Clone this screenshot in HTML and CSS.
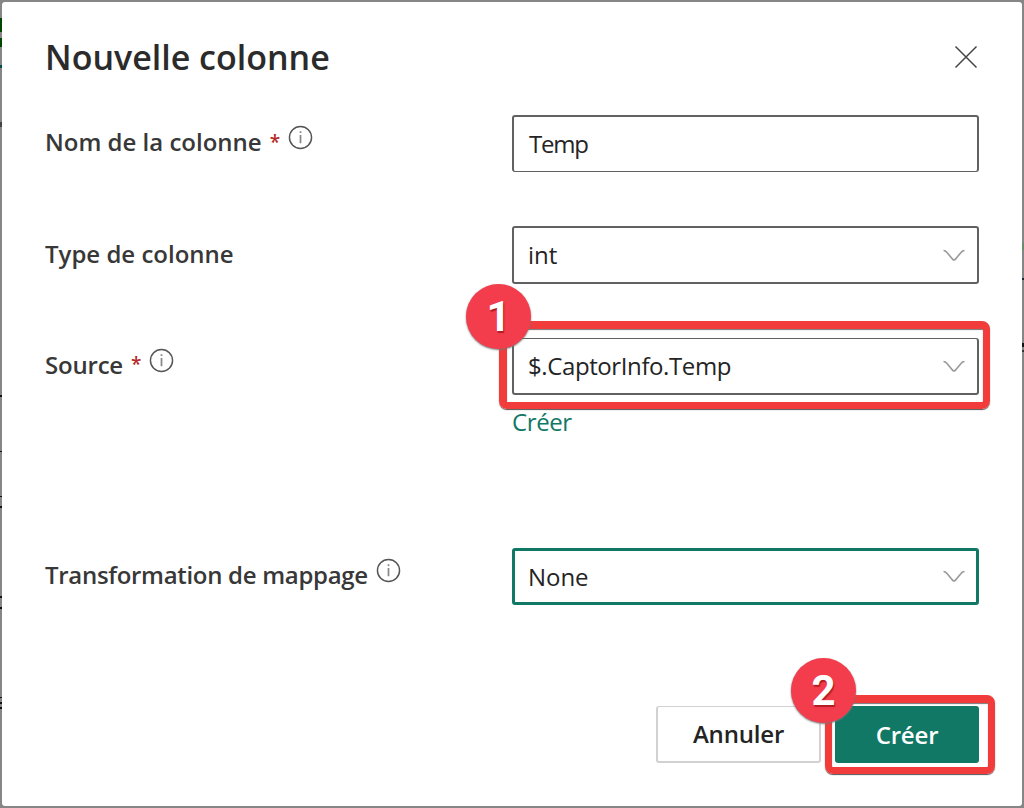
FILE: index.html
```
<!DOCTYPE html>
<html lang="fr">
<head>
<meta charset="utf-8">
<title>Nouvelle colonne</title>
<link rel="stylesheet" href="styles.css">
</head>
<body>
<svg class="symbols" aria-hidden="true">
  <symbol id="info" viewBox="0 0 26 26"><circle cx="13" cy="13" r="11.5" fill="none" stroke="#555" stroke-width="1.5"/><path d="M13 10.500V19M13 6.500V8.300" stroke="#888" stroke-width="1.8"/></symbol>
  <symbol id="chevron" viewBox="0 0 24 14"><path d="M1.500 1.500Q3.500 1.500 5 3.500L10 9.500Q12 12.500 14 9.500L19 3.500Q20.500 1.500 22.500 1.500" fill="none" stroke="#999" stroke-width="1.6"/></symbol>
</svg>
<main class="dialog" role="dialog" aria-labelledby="title">
  <header class="header">
    <h1 class="title" id="title">Nouvelle colonne</h1>
    <button class="close" aria-label="Fermer"><svg width="24" height="24" viewBox="0 0 24 24"><path d="M1.500 1.500L22.500 22.500M22.500 1.500L1.500 22.500" stroke="#444" stroke-width="1.5"/></svg></button>
  </header>
  <div class="form">
    <div class="row">
      <div class="label"><span>Nom de la colonne</span><span class="required">*</span><svg class="info"><use href="#info"/></svg></div>
      <div class="control name"><span class="text-temp">Temp</span></div>
    </div>
    <div class="row">
      <div class="label label-type"><span>Type de colonne</span></div>
      <div class="control"><span>int</span><svg class="chevron"><use href="#chevron"/></svg></div>
    </div>
    <div class="row source">
      <div class="label label-source"><span>Source</span><span class="required">*</span><svg class="info"><use href="#info"/></svg></div>
      <div class="field">
        <div class="control path"><span>$.CaptorInfo.Temp</span><svg class="chevron"><use href="#chevron"/></svg></div>
        <a class="link">Créer</a>
        <div class="highlight highlight-source"></div>
        <div class="badge badge-one">1</div>
      </div>
    </div>
    <div class="row">
      <div class="label label-map"><span>Transformation de mappage</span><svg class="info"><use href="#info"/></svg></div>
      <div class="control focused"><span>None</span><svg class="chevron"><use href="#chevron"/></svg></div>
    </div>
  </div>
  <footer class="footer">
    <button class="button cancel">Annuler</button>
    <div class="action">
      <button class="button primary">Créer</button>
      <div class="highlight highlight-action"></div>
      <div class="badge badge-two">2</div>
    </div>
  </footer>
</main>
</body>
</html>
```
FILE: styles.css
```
* { box-sizing: border-box; }
body { margin: 0; width: 1024px; height: 808px; padding: 2px; overflow: hidden; background: linear-gradient(#004500 0 0) 0 18px / 2px 14px no-repeat, linear-gradient(#004500 0 0) 0 38px / 2px 9px no-repeat, linear-gradient(#005048 0 0) 0 65px / 2px 3px no-repeat, linear-gradient(#444 0 0) 0 122px / 2px 5px no-repeat, linear-gradient(#111 0 0) 0 395px / 2px 2px no-repeat, linear-gradient(#111 0 0) 0 451px / 2px 1px no-repeat, linear-gradient(#111 0 0) 0 496px / 2px 1px no-repeat, linear-gradient(#111 0 0) 0 506px / 2px 2px no-repeat, linear-gradient(#111 0 0) 0 596px / 2px 2px no-repeat, linear-gradient(#111 0 0) 0 607px / 2px 2px no-repeat, linear-gradient(#111 0 0) 0 697px / 2px 1px no-repeat, linear-gradient(#111 0 0) 0 702px / 2px 2px no-repeat, linear-gradient(#111 0 0) 0 707px / 2px 2px no-repeat, linear-gradient(#6a8a6c 0 0) 1022px 243px / 2px 7px no-repeat, linear-gradient(#1c2836 0 0) 1022px 278px / 2px 2px no-repeat, linear-gradient(#111 0 0) 1022px 343px / 2px 4px no-repeat, linear-gradient(#333 0 0) 1022px 350px / 2px 2px no-repeat, #868686; font-family: "Open Sans", "Noto Sans", sans-serif; color: #242424; }
.symbols { position: absolute; width: 0; height: 0; }
.dialog { width: 1020px; height: 804px; border-radius: 3px; background: #fff; padding: 30px 43px 43px 43px; display: flex; flex-direction: column; }
.header { display: flex; align-items: center; justify-content: space-between; height: 50px; }
.title { margin: 0; font-size: 34px; line-height: 50px; font-weight: 560; white-space: nowrap; color: #2b2b2b; }
.close { border: 0; padding: 0; margin: 0 1px 0 0; width: 24px; height: 24px; background: none; }
.close svg { display: block; }
.form { margin-top: 33px; }
.row { display: grid; grid-template-columns: 467px 467px; height: 57px; margin-bottom: 54px; }
.source { height: 102px; margin-bottom: 108px; }
.label { display: flex; height: 53px; align-items: center; font-size: 24px; font-weight: 560; white-space: nowrap; color: #383838; }
.label-type { height: 54px; }
.label-source { height: 54px; letter-spacing: -.2px; }
.label-map { height: 55px; letter-spacing: -.3px; }
.required { color: #b52a2a; margin-left: 8px; font-size: 19px; }
.info { width: 25px; height: 25px; margin: -8px 0 0 8px; }
.control { height: 58px; border: 2px solid #616161; border-radius: 3px; display: flex; align-items: center; justify-content: space-between; padding: 0 11px 2px 14px; font-size: 24px; letter-spacing: -.05px; }
.name { height: 57px; border-bottom-width: 1px; }
.text-temp { letter-spacing: -1.2px; padding-left: 1px; }
.path { height: 57px; margin-top: 1px; border-top-width: 1px; letter-spacing: -.4px; }
.focused { height: 57px; margin-top: 1px; border: 3px solid #117865; padding: 0 10px 1px 13px; }
.chevron { width: 24px; height: 14px; margin-top: 3px; }
.focused .chevron { margin-top: 2px; }
.field { position: relative; }
.link { display: block; color: #117865; font-size: 24px; line-height: 34px; margin-top: 10px; letter-spacing: -.4px; }
.highlight { position: absolute; border: 8px solid #f23b3b; border-radius: 8px; box-shadow: 0 1px 1px #555, inset 0 1px 1px #777; }
.highlight-source { left: -13px; top: -16px; width: 491px; height: 88px; border-right-width: 7px; border-bottom-width: 7px; }
.badge { position: absolute; width: 65px; height: 65px; border-radius: 50%; background: #f33c4c; box-shadow: 0 1px 2px #777; color: #fff; font: 700 42px/65px Roboto, "Liberation Sans", sans-serif; text-align: center; text-shadow: 1px 2px 1px #7008; }
.badge-one { left: -46px; top: -53px; }
.footer { margin-top: auto; display: flex; justify-content: flex-end; gap: 14px; }
.button { height: 57px; border-radius: 3px; padding: 0 0 1px; font: 560 24px "Open Sans", sans-serif; color: #242424; letter-spacing: -.2px; }
.cancel { width: 165px; background: #fff; border: 2px solid #d1d1d1; border-top-width: 1px; }
.action { position: relative; width: 144px; height: 57px; }
.primary { width: 144px; background: #117865; border: 0; color: #fff; }
.highlight-action { left: -10px; top: -11px; width: 170px; height: 79px; border-width: 8px 7px 7px; }
.badge-two { left: -44px; top: -48px; }
```
